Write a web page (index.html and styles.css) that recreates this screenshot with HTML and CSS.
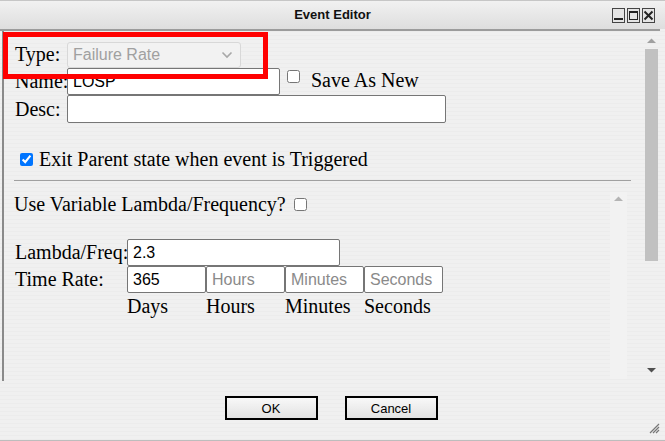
FILE: index.html
```html
<!DOCTYPE html>
<html>
<head>
<meta charset="utf-8">
<link rel="stylesheet" href="styles.css">
</head>
<body>
<div class="window">
  <div class="titlebar">
    <span class="title">Event Editor</span>
    <div class="controls">
      <span class="ctl"><svg width="11" height="13" viewBox="0 0 11 13"><rect x="1" y="9" width="9" height="2" fill="#222"/></svg></span>
      <span class="ctl"><svg width="11" height="13" viewBox="0 0 11 13"><rect x="1.5" y="2.5" width="8" height="8" fill="none" stroke="#222"/><rect x="1" y="2" width="9" height="2" fill="#222"/></svg></span>
      <span class="ctl"><svg width="11" height="13" viewBox="0 0 11 13"><path d="M1.5 2.5 L9.5 10.5 M9.5 2.5 L1.5 10.5" stroke="#222" stroke-width="2"/></svg></span>
    </div>
  </div>
  <div class="panel">
    <div class="panel-content">
      <div class="row">
        <span class="lbl">Type:</span>
        <div class="select"><span>Failure Rate</span>
          <svg width="12" height="8" viewBox="0 0 12 8"><path d="M1.5 1.5 L6 6 L10.5 1.5" fill="none" stroke="#a8a8a8" stroke-width="1.6"/></svg>
        </div>
      </div>
      <div class="row">
        <span class="lbl">Name:</span>
        <input class="txt name" type="text" value="LOSP">
        <input class="cb save-cb" type="checkbox">
        <span class="save-lbl">Save As New</span>
      </div>
      <div class="row">
        <span class="lbl">Desc:</span>
        <input class="txt desc" type="text" value="">
      </div>
      <div class="exit-row">
        <input class="cb" type="checkbox" checked>
        <span>Exit Parent state when event is Triggered</span>
      </div>
      <div class="sep"></div>
      <div class="inner">
        <div class="inner-content">
          <div class="var-row">Use Variable Lambda/Frequency? <input class="cb var-cb" type="checkbox"></div>
          <div class="row2">
            <span class="lbl2">Lambda/Freq:</span>
            <input class="txt lambda" type="text" value="2.3">
          </div>
          <div class="row2">
            <span class="lbl2">Time Rate:</span>
            <input class="txt unit" type="text" value="365">
            <input class="txt unit" type="text" placeholder="Hours">
            <input class="txt unit" type="text" placeholder="Minutes">
            <input class="txt unit" type="text" placeholder="Seconds">
          </div>
          <div class="units">
            <span>Days</span><span>Hours</span><span>Minutes</span><span>Seconds</span>
          </div>
        </div>
        <div class="inner-scroll">
          <svg width="9" height="6" viewBox="0 0 9 6"><path d="M0 5 L4.5 0.5 L9 5 Z" fill="#b4b4b4"/></svg>
        </div>
      </div>
    </div>
    <div class="vscroll">
      <div class="arrow-up"><svg width="9" height="6" viewBox="0 0 9 6"><path d="M0 5 L4.5 0.5 L9 5 Z" fill="#a0a0a0"/></svg></div>
      <div class="thumb"></div>
      <div class="track"></div>
      <div class="arrow-down"><svg width="9" height="6" viewBox="0 0 9 6"><path d="M0 1 L4.5 5.5 L9 1 Z" fill="#505050"/></svg></div>
    </div>
  </div>
  <div class="footer">
    <button class="btn">OK</button>
    <button class="btn">Cancel</button>
    <svg class="grip" width="12" height="12" viewBox="0 0 12 12"><path d="M11 2 L2 11 M11 5 L5 11 M11 8 L8 11" stroke="#777" stroke-width="1.2"/></svg>
  </div>
  <div class="highlight"></div>
</div>
</body>
</html>
```
FILE: styles.css
```css
html, body {
  margin: 0;
  padding: 0;
}
body {
  background: #efefef;
  font-family: "Liberation Serif", "Times New Roman", serif;
  font-size: 20px;
  color: #000;
}
.window {
  position: relative;
  width: 665px;
  height: 441px;
  display: flex;
  flex-direction: column;
  box-sizing: border-box;
  border-bottom: 1px solid #bdbdbd;
  background: repeating-linear-gradient(#f0f0f0 0px, #f0f0f0 3px, #ececec 3px, #ececec 4px);
}
.titlebar {
  height: 29px;
  flex: none;
  box-sizing: border-box;
  border-top: 1px solid #c6c6c6;
  background: linear-gradient(#f1f1f1, #dedede);
  display: flex;
  align-items: center;
  justify-content: center;
  position: relative;
}
.title {
  font-family: "Liberation Sans", Arial, sans-serif;
  font-weight: bold;
  font-size: 13px;
  color: #111;
  margin-top: -2px;
}
.controls {
  position: absolute;
  right: 10px;
  top: 7px;
  display: flex;
  gap: 2px;
}
.ctl {
  width: 13px;
  height: 15px;
  box-sizing: border-box;
  border: 1px solid #444;
  background: #e4e4e4;
  display: flex;
}
.panel {
  height: 350px;
  flex: none;
  margin-right: 5px;
  border-top: 2px solid #9c9c9c;
  display: flex;
}
.panel-content {
  flex: 1;
  margin-left: 2px;
  border-left: 2px solid #8a8a8a;
  padding: 10px 0 0 11px;
  display: flex;
  flex-direction: column;
  min-width: 0;
}
.row {
  display: flex;
  align-items: center;
  height: 27px;
}
.lbl {
  width: 52px;
  flex: none;
}
.select {
  width: 174px;
  height: 26px;
  box-sizing: border-box;
  border: 1px solid #d8d8d8;
  border-radius: 3px;
  background: #f2f2f2;
  display: flex;
  align-items: center;
  justify-content: space-between;
  padding: 0 7px 0 5px;
  font-family: "Liberation Sans", Arial, sans-serif;
  font-size: 16px;
  color: #a0a0a0;
}
.txt {
  box-sizing: border-box;
  height: 27px;
  border: 1px solid #767676;
  border-radius: 2px;
  background: #fff;
  padding: 1px 5px 0 5px;
  margin: 0;
  font-family: "Liberation Sans", Arial, sans-serif;
  font-size: 16px;
  color: #000;
  outline: none;
}
.txt::placeholder {
  color: #8a8a8a;
}
.name {
  width: 213px;
}
.desc {
  width: 379px;
  height: 28px;
}
.row:nth-child(3) {
  height: 28px;
}
.cb {
  width: 13px;
  height: 13px;
  margin: 0;
  accent-color: #0075ff;
}
.save-cb {
  margin-left: 7px;
  align-self: flex-start;
  margin-top: 2px;
}
.save-lbl {
  margin-left: 11px;
  align-self: flex-start;
  margin-top: 1px;
}
.exit-row {
  display: flex;
  align-items: center;
  margin-top: 25px;
  height: 22px;
  padding-left: 5px;
  gap: 6px;
}
.sep {
  height: 1px;
  background: #a0a0a0;
  margin: 10px 12px 0 -1px;
  flex: none;
}
.inner {
  flex: 1;
  display: flex;
  margin-left: -11px;
}
.inner-content {
  flex: 1;
  padding: 10px 0 0 10px;
}
.inner-scroll {
  width: 17px;
  margin: 11px 16px 2px 0;
  background: #f2f2f2;
  display: flex;
  justify-content: center;
  padding-top: 4px;
  box-sizing: border-box;
}
.var-row {
  height: 26px;
  display: flex;
  align-items: center;
  white-space: pre;
}
.var-cb {
  margin-left: 3px;
}
.row2 {
  display: flex;
  align-items: center;
  height: 27px;
  padding-left: 1px;
}
.var-row + .row2 {
  margin-top: 22px;
}
.lbl2 {
  width: 112px;
  flex: none;
}
.lambda {
  width: 213px;
}
.unit {
  width: 79px;
}
.units {
  display: grid;
  grid-template-columns: repeat(4, 79px);
  padding-left: 113px;
  height: 27px;
  align-items: center;
}
.vscroll {
  width: 14px;
  margin-left: 1px;
  margin-right: 2px;
  display: flex;
  flex-direction: column;
}
.arrow-up {
  height: 18px;
  display: flex;
  align-items: center;
  justify-content: center;
  padding-top: 2px;
  box-sizing: border-box;
}
.thumb {
  height: 212px;
  background: #c1c1c1;
  margin-left: 1px;
}
.track {
  flex: 1;
}
.arrow-down {
  height: 16px;
  display: flex;
  align-items: flex-start;
  justify-content: center;
  padding-top: 2px;
  box-sizing: border-box;
}
.footer {
  flex: 1;
  display: flex;
  justify-content: center;
  align-items: flex-start;
  gap: 27px;
  padding-top: 15px;
  padding-right: 3px;
  position: relative;
}
.btn {
  width: 93px;
  height: 24px;
  box-sizing: border-box;
  border: 2px solid #000;
  border-radius: 0;
  background: linear-gradient(#f8f8f8, #e2e2e2);
  font-family: "Liberation Sans", Arial, sans-serif;
  font-size: 13px;
  color: #000;
  padding: 0;
  margin: 0;
}
.grip {
  position: absolute;
  right: 5px;
  bottom: 6px;
}
.highlight {
  position: absolute;
  left: 3px;
  top: 32px;
  width: 265px;
  height: 47px;
  box-sizing: border-box;
  border: 5px solid #ff0000;
  pointer-events: none;
}
```
